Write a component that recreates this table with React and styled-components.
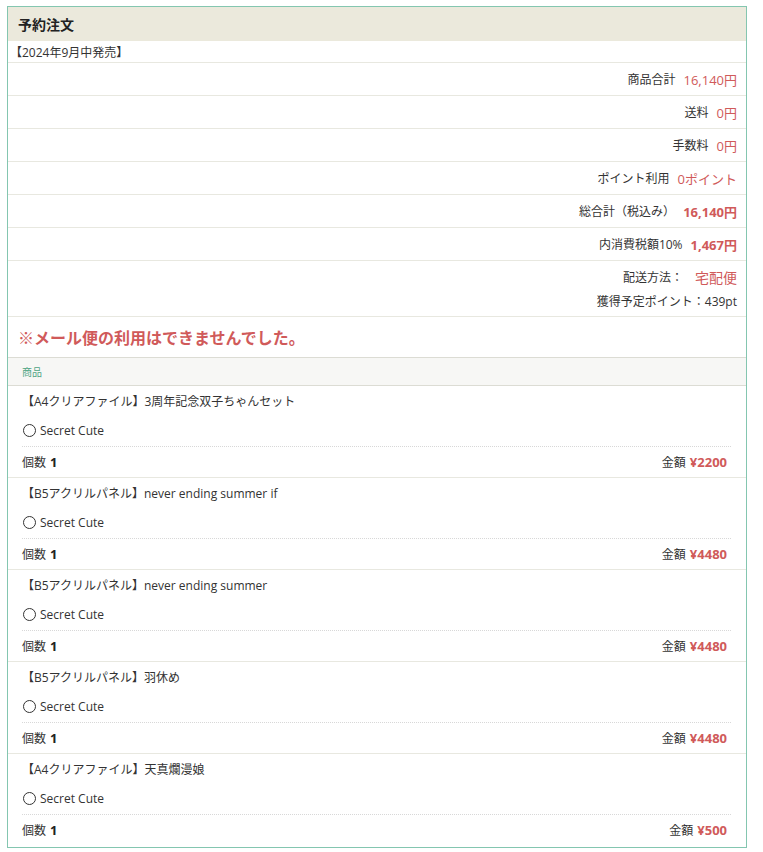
import React from 'react';
import styled, { createGlobalStyle } from 'styled-components';

const GlobalStyle = createGlobalStyle`
  body {
    margin: 0;
    background: #fff;
    font-family: "Open Sans", "Noto Sans CJK JP", sans-serif;
    color: #333;
  }
`;

const red = '#d05a5a';

const Panel = styled.section`
  width: 738px;
  margin: 6px 0 0 7px;
  border: 1px solid #84c6b0;
  background: #fff;
`;

const Header = styled.h2`
  margin: 0;
  height: 34px;
  padding-left: 10px;
  display: flex;
  align-items: center;
  background: #ebe9dc;
  font-family: "Noto Sans CJK JP", sans-serif;
  font-size: 14px;
  font-weight: bold;
  color: #222;
`;

const Release = styled.div`
  height: 21px;
  padding-left: 2px;
  display: flex;
  align-items: center;
  font-size: 12px;
  border-bottom: 1px solid #e8e8e0;
`;

const SumRow = styled.div`
  height: 32px;
  padding-right: 9px;
  display: flex;
  align-items: center;
  justify-content: flex-end;
  gap: 8px;
  font-size: 12px;
  border-bottom: 1px solid #e8e8e0;
`;

const Value = styled.span`
  color: ${red};
  font-weight: ${(p) => (p.$bold ? 'bold' : 'normal')};
  font-size: ${(p) => (p.$large ? '14px' : '13px')};
`;

const ShipBlock = styled.div`
  padding: 4px 9px 4px 0;
  display: flex;
  flex-direction: column;
  align-items: flex-end;
  gap: 1px;
  font-size: 12px;
  border-bottom: 1px solid #e8e8e0;
`;

const ShipLine = styled.div`
  display: flex;
  align-items: center;
  gap: 12px;
  height: ${(p) => (p.$h ? p.$h : 22)}px;
`;

const Warning = styled.div`
  height: 40px;
  padding-left: 10px;
  display: flex;
  align-items: center;
  font-family: "Noto Sans CJK JP", sans-serif;
  font-size: 16px;
  font-weight: bold;
  color: ${red};
  border-bottom: 1px solid #dcdcd4;
`;

const ListHead = styled.div`
  height: 27px;
  padding-left: 14px;
  display: flex;
  align-items: center;
  background: #f7f7f5;
  font-size: 10px;
  color: #4fa584;
  border-bottom: 1px solid #dcdcd4;
`;

const Item = styled.div`
  padding: 0 15px ${(p) => (p.$last ? '2px' : '0')} 14px;
  border-bottom: ${(p) => (p.$last ? 'none' : '1px solid #e8e8e0')};
`;

const Title = styled.div`
  height: 29px;
  display: flex;
  align-items: center;
  font-size: 12px;
`;

const Option = styled.div`
  height: 31px;
  display: flex;
  align-items: center;
  gap: 4px;
  font-size: 12px;
  margin-left: 1px;
`;

const Circle = styled.span`
  display: inline-block;
  width: 11px;
  height: 11px;
  border: 1px solid #333;
  border-radius: 50%;
`;

const QtyRow = styled.div`
  height: 30px;
  display: flex;
  align-items: center;
  justify-content: space-between;
  padding-right: 4px;
  font-size: 12px;
  border-top: 1px dotted #d8d8d8;
`;

const Num = styled.b`
  margin-left: 4px;
  font-size: 13px;
  color: ${(p) => (p.$red ? red : '#222')};
`;

const summary = [
  { label: '商品合計', value: '16,140円' },
  { label: '送料', value: '0円' },
  { label: '手数料', value: '0円' },
  { label: 'ポイント利用', value: '0ポイント' },
  { label: '総合計（税込み）', value: '16,140円', bold: true },
  { label: '内消費税額10%', value: '1,467円', bold: true },
];

const items = [
  { name: '【A4クリアファイル】3周年記念双子ちゃんセット', price: '¥2200' },
  { name: '【B5アクリルパネル】never ending summer if', price: '¥4480' },
  { name: '【B5アクリルパネル】never ending summer', price: '¥4480' },
  { name: '【B5アクリルパネル】羽休め', price: '¥4480' },
  { name: '【A4クリアファイル】天真爛漫娘', price: '¥500' },
];

export default function App() {
  return (
    <>
      <GlobalStyle />
      <Panel>
        <Header>予約注文</Header>
        <Release>【2024年9月中発売】</Release>
        {summary.map((s) => (
          <SumRow key={s.label}>
            <span>{s.label}</span>
            <Value $bold={s.bold}>{s.value}</Value>
          </SumRow>
        ))}
        <ShipBlock>
          <ShipLine $h={24}>
            <span>配送方法：</span>
            <Value $large>宅配便</Value>
          </ShipLine>
          <ShipLine>獲得予定ポイント：439pt</ShipLine>
        </ShipBlock>
        <Warning>※メール便の利用はできませんでした。</Warning>
        <ListHead>商品</ListHead>
        {items.map((it, i) => (
          <Item key={it.name} $last={i === items.length - 1}>
            <Title>{it.name}</Title>
            <Option>
              <Circle />
              Secret Cute
            </Option>
            <QtyRow>
              <span>
                個数<Num>1</Num>
              </span>
              <span>
                金額<Num $red>{it.price}</Num>
              </span>
            </QtyRow>
          </Item>
        ))}
      </Panel>
    </>
  );
}
